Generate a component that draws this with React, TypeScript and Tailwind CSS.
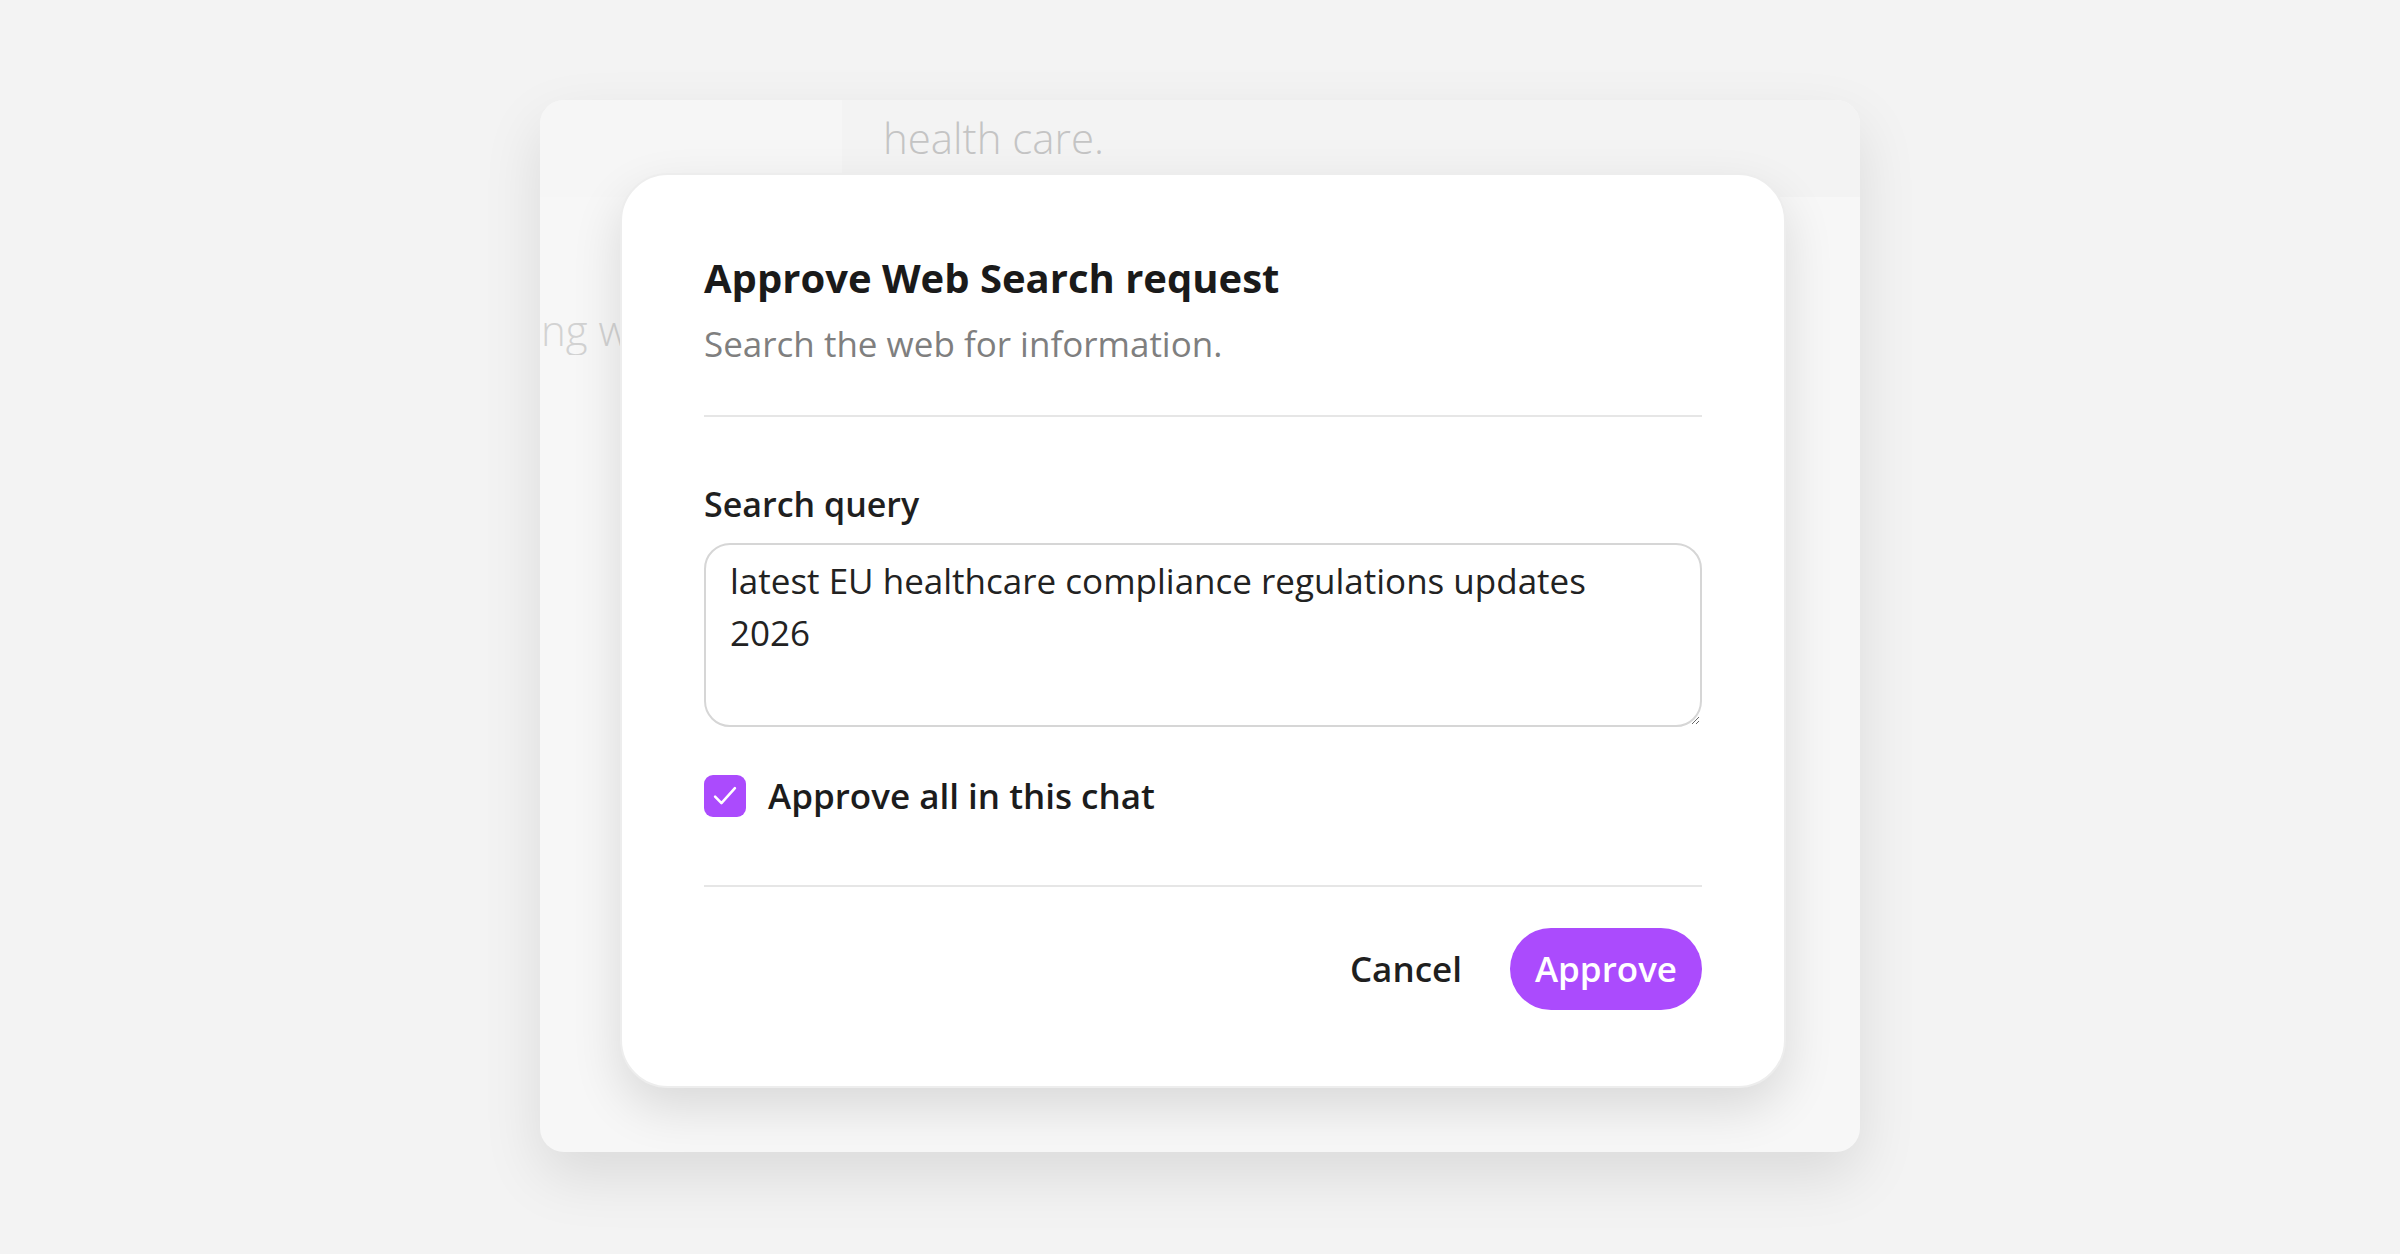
import React, { useState } from 'react';

const CheckIcon: React.FC = () => (
  <svg viewBox="0 0 24 24" className="w-[34px] h-[34px]" fill="none" stroke="white" strokeWidth={1.8} strokeLinecap="round" strokeLinejoin="round">
    <polyline points="5 12.5 9.5 17 19 6.5" />
  </svg>
);

export default function App() {
  const [approveAll, setApproveAll] = useState(true);
  const [query, setQuery] = useState('latest EU healthcare compliance regulations updates 2026');

  return (
    <div className="w-full h-screen bg-[#f3f3f3] flex items-center justify-center font-[family-name:'Open_Sans',sans-serif]">
      {/* Chat window behind the dialog */}
      <div className="relative w-[1320px] h-[1052px] rounded-[24px] bg-[#f7f7f7] overflow-hidden shadow-[0_24px_60px_rgba(0,0,0,0.10)] -mt-[2px]">
        <div className="flex h-[97px]">
          <div className="w-[302px] bg-[#f6f6f6]" />
          <div className="flex-1 bg-[#f3f3f3] pl-[41px] pt-[13px]">
            <p className="text-[42px] leading-[50px] font-light text-[#c4c4c4]">health care.</p>
          </div>
        </div>
        <div className="mt-[108px] w-[80px] overflow-hidden">
          <p className="-ml-[28px] text-[42px] leading-[50px] font-light text-[#d2d2d2] whitespace-nowrap">sing w</p>
        </div>

        {/* Dialog */}
        <div className="absolute left-[80px] top-[73px] w-[1166px] rounded-[48px] bg-white border-2 border-[#ededed] shadow-[0_20px_50px_rgba(0,0,0,0.12)] px-[82px] pt-[78px] pb-[76px]">
          <h2 className="text-[40px] leading-[50px] font-bold text-[#1a1a1a]">Approve Web Search request</h2>
          <p className="mt-[17px] text-[35px] leading-[48px] text-[#7f7f7f]">Search the web for information.</p>

          <div className="mt-[47px] h-[2px] bg-[#e6e6e6]" />

          <label className="block mt-[63px] text-[34px] leading-[48px] font-semibold text-[#1f1f1f]">Search query</label>
          <textarea
            value={query}
            onChange={e => setQuery(e.target.value)}
            className="mt-[15px] block w-full h-[184px] rounded-[26px] border-2 border-[#d6d6d6] pl-[24px] pr-[40px] pt-[10px] text-[35px] leading-[52px] text-[#222] outline-none resize-y"
          />

          <button
            type="button"
            onClick={() => setApproveAll(v => !v)}
            className="mt-[45px] flex items-center gap-[22px]"
          >
            <span className={`w-[42px] h-[42px] rounded-[9px] flex items-center justify-center ${approveAll ? 'bg-[#ab4bfd]' : 'border-2 border-[#ccc] bg-white'}`}>
              {approveAll && <CheckIcon />}
            </span>
            <span className="text-[35px] leading-[48px] font-semibold text-[#1c1c1c]">Approve all in this chat</span>
          </button>

          <div className="mt-[65px] h-[2px] bg-[#e6e6e6]" />

          <div className="mt-[41px] flex items-center justify-end gap-[48px]">
            <button type="button" className="text-[35px] leading-[48px] font-semibold text-[#1f1f1f]">Cancel</button>
            <button type="button" className="h-[82px] px-[25px] rounded-full bg-[#ab4bfd] text-white text-[35px] font-semibold">Approve</button>
          </div>
        </div>
      </div>
    </div>
  );
}
